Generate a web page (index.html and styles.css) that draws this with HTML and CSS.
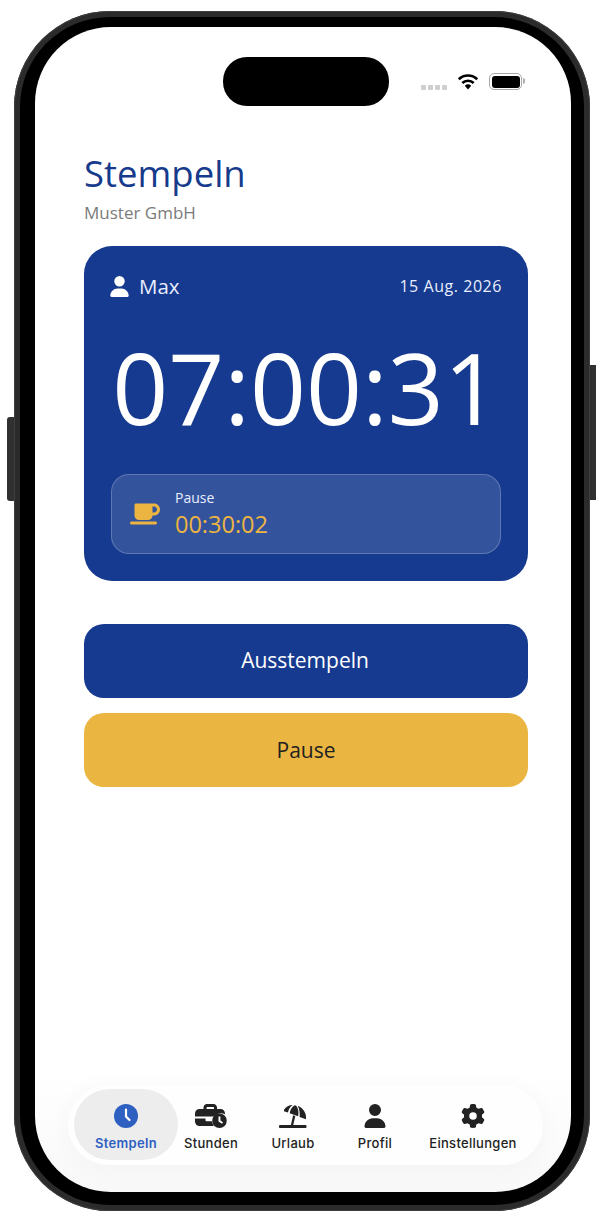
FILE: index.html
```html
<!DOCTYPE html>
<html lang="de">
<head>
<meta charset="utf-8">
<title>Stempeln</title>
<link rel="stylesheet" href="styles.css">
</head>
<body>
<div class="device">
  <span class="side-btn side-left"></span>
  <span class="side-btn side-right"></span>
  <div class="bezel">
    <main class="screen">
      <div class="statusbar">
        <div class="island"></div>
        <div class="signal"><i></i><i></i><i></i><i></i></div>
        <svg class="wifi" viewBox="0 0 22 17"><path class="wifi-arc" d="M1.800 6.200a13.200 13.200 0 0 1 18.400 0"/><path class="wifi-arc" d="M5.300 10a8.200 8.200 0 0 1 11.400 0"/><path d="M7.800 12.800a4.700 4.700 0 0 1 6.400 0L11 16.500z"/></svg>
        <div class="battery"><span class="battery-fill"></span><span class="battery-cap"></span></div>
      </div>
      <h1 class="title">Stempeln</h1>
      <p class="company">Muster GmbH</p>

      <section class="card">
        <div class="card-head">
          <div class="who">
            <svg class="who-icon" viewBox="0 0 448 512"><path d="M224 256A128 128 0 1 0 224 0a128 128 0 1 0 0 256zm-45.700 48C79.800 304 0 383.800 0 482.300C0 498.700 13.300 512 29.700 512H418.300c16.400 0 29.700-13.300 29.700-29.700C448 383.800 368.200 304 269.700 304H178.300z"/></svg>
            <span class="who-name">Max</span>
          </div>
          <span class="date">15 Aug. 2026</span>
        </div>
        <div class="clock">07:00:31</div>
        <div class="pause-box">
          <svg class="cup" viewBox="0 0 640 512"><path fill-rule="evenodd" d="M96 64c0-17.700 14.300-32 32-32H448h64c70.700 0 128 57.300 128 128s-57.300 128-128 128H480c0 53-43 96-96 96H192c-53 0-96-43-96-96V64zM480 224h32c35.300 0 64-28.700 64-64s-28.700-64-64-64H480V224zM32 416H544c17.700 0 32 14.300 32 32s-14.300 32-32 32H32c-17.700 0-32-14.300-32-32s14.300-32 32-32z"/></svg>
          <div class="pause-text">
            <span class="pause-label">Pause</span>
            <span class="pause-time">00:30:02</span>
          </div>
        </div>
      </section>

      <button class="action action-primary">Ausstempeln</button>
      <button class="action action-accent">Pause</button>

      <nav class="tabbar">
        <div class="tab tab-active">
          <svg class="tab-icon" viewBox="0 0 24 24"><circle cx="12" cy="12" r="12"/><path d="M12 5.500v7l3.500 3.500" fill="none" stroke="#fff" stroke-width="2.200" stroke-linecap="round" stroke-linejoin="round"/></svg>
          <span class="tab-label">Stempeln</span>
        </div>
        <div class="tab">
          <svg class="tab-icon tab-icon-case" viewBox="0 0 32 24"><path fill-rule="evenodd" d="M8.500 3.500C8.500 1.600 10.100 0 12 0h6.500c1.900 0 3.500 1.600 3.500 3.500V5h3.500c2.500 0 4.500 2 4.500 4.500v.7A9 9 0 0 0 18.900 12.500H0v-3C0 7 2 5 4.500 5h4V3.500zM11.500 5h7.500V3.800c0-.4-.3-.8-.8-.8h-5.900c-.4 0-.8.400-.8.800V5z"/><path d="M0 14.500h10.500v1.700a1 1 0 0 0 1 1H17.200c.1 1.800.7 3.500 1.700 4.800H4.500C2 22 0 20 0 17.500v-3z"/><path fill-rule="evenodd" d="M24.500 9.500a7.250 7.250 0 1 0 0 14.500 7.250 7.250 0 0 0 0-14.500zm-1 3h1.900v4l2.600 1.700-1 1.500-3.500-2.300v-4.900z"/></svg>
          <span class="tab-label">Stunden</span>
        </div>
        <div class="tab">
          <svg class="tab-icon tab-icon-beach" viewBox="0 0 28 24"><path d="M5 5.800C7 2.800 10 1.100 13.600 1 11.100 2.700 9.500 5.300 9 8.600L5 7.300z"/><path d="M15.200 1.500c-2.500 1.700-4 4.300-4.500 7.700l8.400 3.100c.9-3.600.4-7.700-2-10.700-.6-.1-1.300-.1-1.900-.1z"/><path d="M18.800 1.900c1.700 3.100 2.200 6.900 1.800 11l6.400 2.300c.8-5.800-2.700-11.500-8.200-13.300z"/><path d="M14.100 11.300l2.200.7L14 22h-2.300z"/><rect x="0" y="21" width="27.500" height="3" rx="1"/></svg>
          <span class="tab-label">Urlaub</span>
        </div>
        <div class="tab">
          <svg class="tab-icon" viewBox="0 0 448 512"><path d="M224 256A128 128 0 1 0 224 0a128 128 0 1 0 0 256zm-45.700 48C79.800 304 0 383.800 0 482.300C0 498.700 13.300 512 29.700 512H418.300c16.400 0 29.700-13.300 29.700-29.700C448 383.800 368.200 304 269.700 304H178.300z"/></svg>
          <span class="tab-label">Profil</span>
        </div>
        <div class="tab">
          <svg class="tab-icon" viewBox="0 0 512 512"><path d="M495.900 166.600c3.200 8.700 .5 18.400-6.400 24.600l-43.300 39.400c1.100 8.300 1.700 16.800 1.700 25.400s-.6 17.100-1.700 25.400l43.300 39.400c6.900 6.200 9.600 15.900 6.400 24.600c-4.400 11.900-9.700 23.300-15.800 34.300l-4.700 8.100c-6.600 11-14 21.400-22.100 31.200c-5.900 7.200-15.700 9.600-24.500 6.800l-55.700-17.700c-13.400 10.300-28.200 18.900-44 25.400l-12.500 57.100c-2 9.100-9 16.300-18.200 17.800c-13.800 2.300-28 3.500-42.500 3.500s-28.700-1.200-42.500-3.500c-9.200-1.500-16.200-8.700-18.200-17.800l-12.500-57.100c-15.800-6.500-30.600-15.100-44-25.400L83.100 425.900c-8.800 2.800-18.600 .3-24.500-6.800c-8.100-9.800-15.500-20.200-22.100-31.200l-4.700-8.100c-6.100-11-11.400-22.400-15.800-34.300c-3.200-8.700-.5-18.400 6.400-24.600l43.300-39.400C64.600 273.100 64 264.600 64 256s.6-17.100 1.700-25.400L22.400 191.200c-6.900-6.200-9.600-15.900-6.400-24.600c4.400-11.900 9.700-23.300 15.800-34.300l4.700-8.100c6.600-11 14-21.400 22.100-31.200c5.900-7.200 15.700-9.600 24.500-6.800l55.700 17.700c13.400-10.300 28.200-18.900 44-25.400l12.500-57.100c2-9.100 9-16.300 18.200-17.800C227.300 1.200 241.500 0 256 0s28.700 1.200 42.500 3.500c9.200 1.500 16.200 8.700 18.200 17.800l12.500 57.100c15.800 6.500 30.600 15.100 44 25.400l55.700-17.700c8.800-2.800 18.600-.3 24.500 6.800c8.100 9.800 15.500 20.200 22.100 31.200l4.700 8.100c6.100 11 11.400 22.400 15.800 34.300zM256 336a80 80 0 1 0 0-160 80 80 0 1 0 0 160z" fill-rule="evenodd"/></svg>
          <span class="tab-label">Einstellungen</span>
        </div>
      </nav>
    </main>
  </div>
</div>
</body>
</html>
```
FILE: styles.css
```css
* { box-sizing: border-box; }
html, body { margin: 0; padding: 0; }
body {
  width: 600px;
  height: 1224px;
  background: #fff;
  overflow: hidden;
  font-family: "Open Sans", sans-serif;
}
.device {
  position: relative;
  width: 576px;
  height: 1200px;
  margin: 11px 0 0 14px;
  border-radius: 96px;
  background: #2b2b2b;
  box-shadow: inset 0 0 0 1px #3d3d3d;
  padding: 6px;
}
.side-btn {
  position: absolute;
  background: #303030;
}
.side-left { left: -7px; top: 406px; width: 7px; height: 84px; border-radius: 3px 0 0 3px; }
.side-right { right: -6px; top: 354px; width: 6px; height: 135px; }
.bezel {
  width: 564px;
  height: 1188px;
  border-radius: 90px;
  background: #000;
  padding: 10px 13px 13px 15px;
}
.screen {
  width: 536px;
  height: 1165px;
  border-radius: 76px;
  background: linear-gradient(#fff 90%, #f8f8f8 100%);
  padding: 0 43px 0 49px;
  overflow: hidden;
  display: flex;
  flex-direction: column;
  align-items: flex-start;
}
.statusbar {
  height: 49px;
  margin-top: 30px;
  margin-left: 139px;
  display: flex;
  align-items: flex-start;
}
.island {
  width: 166px;
  height: 49px;
  border-radius: 24px;
  background: #000;
}
.signal {
  display: flex;
  gap: 2px;
  margin: 28px 0 0 32px;
}
.signal i {
  width: 5px;
  height: 5px;
  border-radius: 1px;
  background: #cfcfcf;
}
.wifi {
  width: 22px;
  height: 17px;
  margin: 16px 0 0 10px;
  fill: #000;
}
.wifi-arc {
  fill: none;
  stroke: #000;
  stroke-width: 2.600;
}
.battery {
  position: relative;
  width: 33px;
  height: 17px;
  margin: 16px 0 0 10px;
  padding: 1.500px;
  border: 1.500px solid #a9a9a9;
  border-radius: 5px;
}
.battery-fill {
  display: block;
  width: 100%;
  height: 100%;
  border-radius: 3px;
  background: #000;
}
.battery-cap {
  position: absolute;
  right: -4px;
  top: 4px;
  width: 2px;
  height: 6px;
  border-radius: 0 2px 2px 0;
  background: #b0b0b0;
}
.title {
  margin: 43px 0 0;
  font-size: 36.500px;
  line-height: 48px;
  font-weight: 400;
  color: #163a8c;
}
.company {
  margin: 4px 0 0;
  font-size: 17px;
  line-height: 23px;
  color: #7b7b7b;
}
.card {
  width: 444px;
  height: 335px;
  margin-top: 22px;
  padding: 26px 26px;
  border-radius: 28px;
  background: #163a8f;
  color: #fff;
}
.card-head {
  display: flex;
  justify-content: space-between;
  align-items: center;
  height: 28px;
}
.who { display: flex; align-items: center; gap: 10px; }
.who-icon { width: 19px; height: 21px; fill: #fff; }
.who-name { font-size: 20.500px; color: #e8eeff; }
.date { font-size: 16px; letter-spacing: .55px; color: #e8eeff; }
.clock {
  margin-top: 27px;
  height: 120px;
  font-size: 98px;
  line-height: 120px;
  text-align: center;
  white-space: nowrap;
}
.pause-box {
  display: flex;
  align-items: center;
  gap: 16px;
  width: 390px;
  height: 80px;
  margin: 27px 0 0 1px;
  padding-left: 18px;
  border: 1px solid rgba(255, 255, 255, .22);
  border-radius: 18px;
  background: rgba(255, 255, 255, .13);
}
.cup { width: 30px; height: 24px; fill: #ecb541; }
.pause-text { display: flex; flex-direction: column; margin-left: -1px; }
.pause-label { font-size: 14px; line-height: 20px; color: #e8eeff; }
.pause-time { font-size: 23.500px; line-height: 32px; color: #ecb541; }
.action {
  display: block;
  width: 444px;
  height: 74px;
  border: 0;
  border-radius: 20px;
  font-family: inherit;
  font-size: 21px;
}
.action-primary { margin-top: 43px; padding: 0 2px 2px 0; background: #163a8f; color: #fff; }
.action-accent { margin-top: 15px; background: #ebb541; color: #222; }
.tabbar {
  display: grid;
  grid-template-columns: 104px 66px 98px 66px 130px;
  width: 475px;
  height: 80px;
  margin: 298px 0 0 -16px;
  padding: 4px 0 5px 6px;
  border-radius: 40px;
  background: #fefefe;
  box-shadow: 0 2px 24px rgba(0, 0, 0, .035);
}
.tab {
  display: flex;
  flex-direction: column;
  align-items: center;
  padding-top: 15px;
  border-radius: 36px;
  color: #222;
  white-space: nowrap;
}
.tab-active { background: #ededed; color: #2d60c0; }
.tab-icon { width: 24px; height: 24px; fill: currentColor; flex: none; }
.tab-icon-case { width: 32px; }
.tab-icon-beach { width: 28px; }
.tab-label {
  margin-top: 6px;
  font-family: Inter, sans-serif;
  font-size: 13px;
  line-height: 18px;
  font-weight: 500;
  letter-spacing: .3px;
}
.tab-active .tab-label { font-weight: 600; }
```
